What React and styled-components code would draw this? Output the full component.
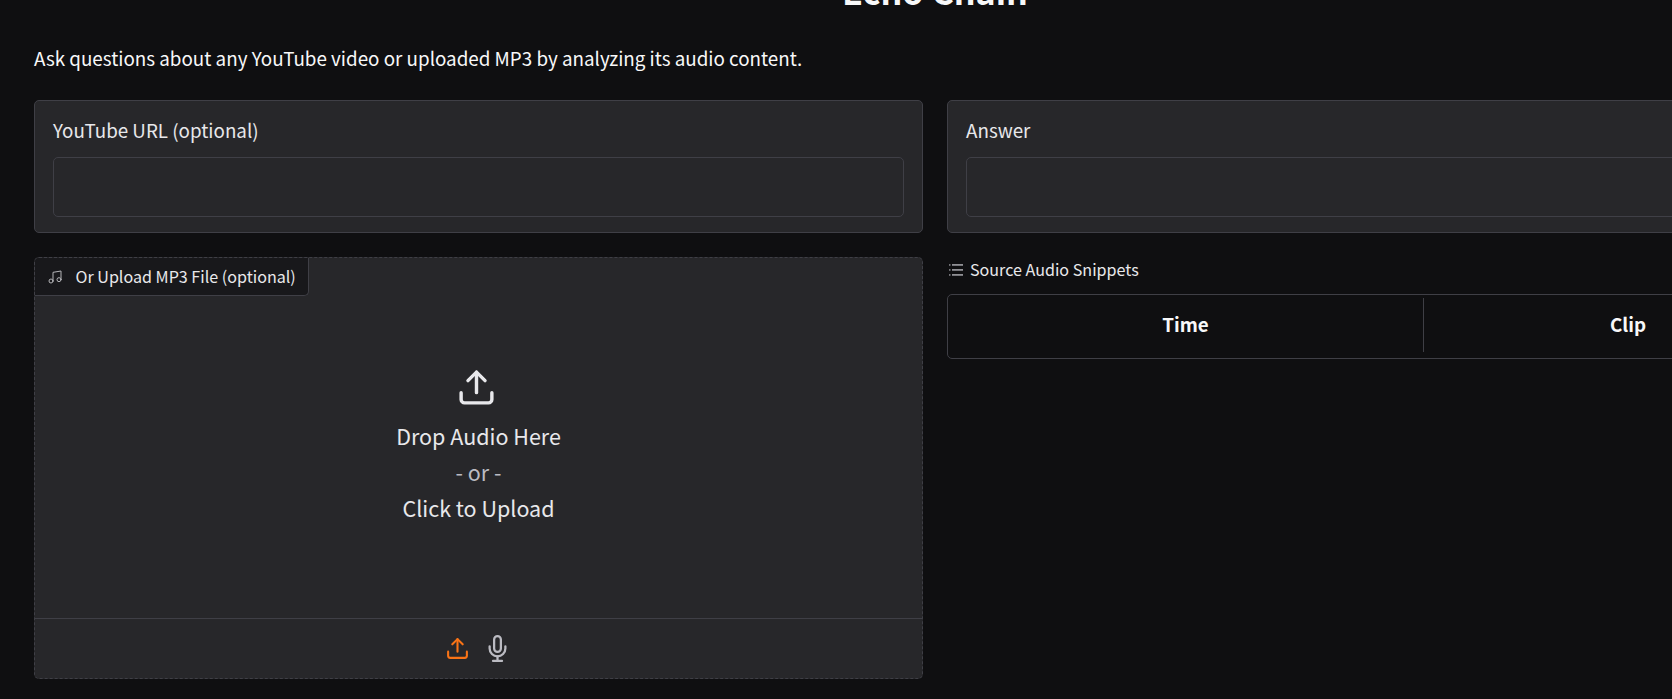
import React from "react";
import styled, { createGlobalStyle } from "styled-components";

const c = { page: "#0f0f11", block: "#27272a", line: "#3f3f46", text: "#f8f8f9", soft: "#e8e8eb", dim: "#bbbbc2", accent: "#f97316", tag: "#18181b" };

const GlobalStyle = createGlobalStyle`
  *, *::before, *::after { box-sizing: border-box; }
  html, body { margin: 0; height: 100%; overflow: hidden; background: ${c.page}; }
  body { font-family: "Noto Sans CJK SC", "Noto Sans", sans-serif; color: ${c.text}; }
`;

const Page = styled.main`
  width: 1870px;
  height: 699px;
  padding: 0 34px;
  overflow: hidden;
`;

const Title = styled.h1`
  margin: -39px 0 0;
  height: 58px;
  line-height: 58px;
  font-size: 34.1px;
  font-weight: 700;
  text-align: center;
`;

const Intro = styled.p`
  margin: 23px 0 26px;
  line-height: 32px;
  font-size: 18.81px;
  white-space: nowrap;
`;

const Columns = styled.div`
  display: grid;
  grid-template-columns: 889px 889px;
  gap: 24px;
`;

const Column = styled.section`
  display: flex;
  flex-direction: column;
  gap: 24px;
`;

const Field = styled.label`
  display: block;
  height: 133px;
  padding: 18px;
  border: 1px solid ${c.line};
  border-radius: 5px;
  background: ${c.block};
`;

const FieldName = styled.span`
  display: block;
  margin-bottom: 16px;
  line-height: 22px;
  font-size: 18.8px;
  color: ${c.soft};
`;

const Input = styled.input`
  display: block;
  width: 100%;
  height: 60px;
  border: 1px solid ${c.line};
  border-radius: 5px;
  background: transparent;
  outline: none;
`;

const UploadBlock = styled.div`
  display: flex;
  flex-direction: column;
  height: 422px;
  border: 1px dashed ${c.line};
  border-radius: 5px;
  background: ${c.block};
  overflow: hidden;
`;

const UploadTag = styled.div`
  display: flex;
  align-items: center;
  align-self: flex-start;
  gap: 13px;
  width: 274px;
  height: 38px;
  padding: 0 0 2px 11.5px;
  border: solid ${c.line};
  border-width: 0 1px 1px 0;
  border-radius: 0 0 5px 0;
  background: ${c.tag};
  color: ${c.soft};
  font-size: 16.1px;
  white-space: nowrap;
  svg { margin-top: 2px; }
`;

const DropZone = styled.div`
  flex: 1;
  display: flex;
  flex-direction: column;
  align-items: center;
  padding-top: 71px;
  font-size: 21.5px;
  line-height: 36px;
  color: ${c.soft};
  svg { margin: 0 4px 10px 0; }
`;

const Or = styled.span`
  color: ${c.dim};
`;

const Sources = styled.div`
  display: flex;
  align-items: center;
  justify-content: center;
  gap: 14px;
  height: 60px;
  padding-right: 2px;
  border-top: 1px solid ${c.line};
`;

const Snippets = styled.div`
  display: flex;
  flex-direction: column;
`;

const SnippetsTitle = styled.div`
  display: flex;
  align-items: center;
  gap: 7px;
  height: 24px;
  margin-bottom: 13px;
  padding-left: 2px;
  font-size: 16.1px;
  color: ${c.soft};
  svg { margin-top: 2px; }
`;

const Table = styled.div`
  display: grid;
  grid-template-columns: 476px 1fr;
  height: 65px;
  padding: 3px 3px 6px 0;
  border: 1px solid ${c.line};
  border-radius: 5px;
`;

const HeadCell = styled.div`
  display: flex;
  align-items: center;
  justify-content: center;
  padding-bottom: 3px;
  border-right: ${(p) => (p.$divided ? `1px solid ${c.line}` : "0")};
  font-size: 18.8px;
  font-weight: 700;
`;

const UploadIcon = ({ size, color }) => (
  <svg width={size} height={size} viewBox="0 0 24 24" fill="none" stroke={color} strokeWidth="2" strokeLinecap="round" strokeLinejoin="round">
    <path d="M21 15v4a2 2 0 0 1-2 2H5a2 2 0 0 1-2-2v-4" />
    <polyline points="17 8 12 3 7 8" />
    <line x1="12" y1="3" x2="12" y2="15" />
  </svg>
);

const MicIcon = () => (
  <svg width="27" height="27" viewBox="0 0 24 24" fill="none" stroke={c.dim} strokeWidth="2" strokeLinecap="round" strokeLinejoin="round">
    <path d="M12 1a3 3 0 0 0-3 3v8a3 3 0 0 0 6 0V4a3 3 0 0 0-3-3z" />
    <path d="M19 10v2a7 7 0 0 1-14 0v-2" />
    <line x1="12" y1="19" x2="12" y2="23" />
    <line x1="8" y1="23" x2="16" y2="23" />
  </svg>
);

const MusicIcon = () => (
  <svg width="16" height="16" viewBox="0 0 24 24" fill="none" stroke="#b4b4b8" strokeWidth="1.5" strokeLinecap="round" strokeLinejoin="round">
    <path d="M9 18V5l12-2v13" />
    <circle cx="6" cy="18" r="3" />
    <circle cx="18" cy="16" r="3" />
  </svg>
);

const ListIcon = () => (
  <svg width="14" height="12" viewBox="0 0 14 12" fill="#909094">
    {[0, 5, 10].map((y) => (
      <g key={y}>
        <rect x="0" y={y + 0.2} width="1.5" height="1.5" />
        <rect x="3" y={y} width="11" height="1.8" />
      </g>
    ))}
  </svg>
);

export default function App() {
  return (
    <Page>
      <GlobalStyle />
      <Title>Echo Chain</Title>
      <Intro>Ask questions about any YouTube video or uploaded MP3 by analyzing its audio content.</Intro>
      <Columns>
        <Column>
          <Field>
            <FieldName>YouTube URL (optional)</FieldName>
            <Input />
          </Field>
          <UploadBlock>
            <UploadTag>
              <MusicIcon />
              Or Upload MP3 File (optional)
            </UploadTag>
            <DropZone>
              <UploadIcon size={41} color={c.soft} />
              <span>Drop Audio Here</span>
              <Or>- or -</Or>
              <span>Click to Upload</span>
            </DropZone>
            <Sources>
              <UploadIcon size={25} color={c.accent} />
              <MicIcon />
            </Sources>
          </UploadBlock>
        </Column>
        <Column>
          <Field>
            <FieldName>Answer</FieldName>
            <Input readOnly />
          </Field>
          <Snippets>
            <SnippetsTitle>
              <ListIcon />
              Source Audio Snippets
            </SnippetsTitle>
            <Table>
              <HeadCell $divided>Time</HeadCell>
              <HeadCell>Clip</HeadCell>
            </Table>
          </Snippets>
        </Column>
      </Columns>
    </Page>
  );
}
